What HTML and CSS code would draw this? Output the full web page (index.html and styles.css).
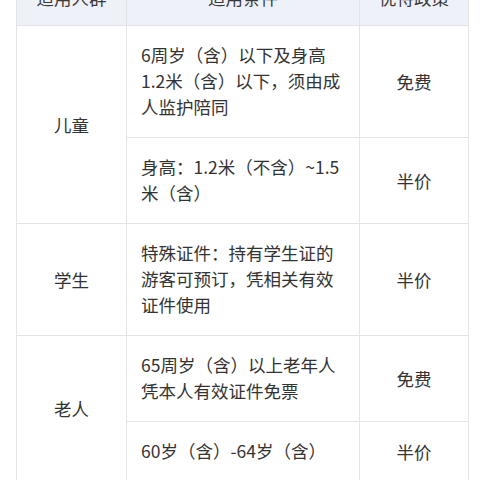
FILE: index.html
```html
<!DOCTYPE html>
<html lang="zh-CN">
<head>
<meta charset="utf-8">
<link rel="stylesheet" href="styles.css">
</head>
<body>
<div class="page">
<table class="policy">
  <colgroup>
    <col class="c1"><col class="c2"><col class="c3">
  </colgroup>
  <thead>
    <tr><th>适用人群</th><th>适用条件</th><th>优待政策</th></tr>
  </thead>
  <tbody>
    <tr class="r3">
      <td class="grp" rowspan="2">儿童</td>
      <td class="cond">6周岁（含）以下及身高1.2米（含）以下，须由成人监护陪同</td>
      <td class="pol">免费</td>
    </tr>
    <tr class="r2">
      <td class="cond">身高：1.2米（不含）~1.5米（含）</td>
      <td class="pol">半价</td>
    </tr>
    <tr class="r3">
      <td class="grp">学生</td>
      <td class="cond">特殊证件：持有学生证的游客可预订，凭相关有效证件使用</td>
      <td class="pol">半价</td>
    </tr>
    <tr class="r2">
      <td class="grp" rowspan="2">老人</td>
      <td class="cond">65周岁（含）以上老年人凭本人有效证件免票</td>
      <td class="pol">免费</td>
    </tr>
    <tr class="r1">
      <td class="cond">60岁（含）-64岁（含）</td>
      <td class="pol">半价</td>
    </tr>
  </tbody>
</table>
</div>
</body>
</html>
```
FILE: styles.css
```css
html, body {
  margin: 0;
  padding: 0;
  background: #ffffff;
}
body {
  font-family: "Noto Sans CJK SC", "Noto Sans", sans-serif;
  color: #333333;
  overflow: hidden;
  height: 480px;
}
.page {
  padding: 0 12px 0 16px;
  margin-top: -30px;
}
.policy {
  border-collapse: collapse;
  width: 452px;
  table-layout: fixed;
  font-size: 17.5px;
  line-height: 26px;
}
.c1 { width: 110px; }
.c2 { width: 233px; }
.c3 { width: 109px; }
.policy th,
.policy td {
  border: 1px solid #e4e4e6;
  padding: 14px 14px 14px 14px;
  vertical-align: middle;
}
.policy th {
  background: #eef1f8;
  font-weight: 400;
  text-align: center;
  color: #3a3a3a;
}
.policy td.cond {
  text-align: left;
  padding: 16px 14px 17px 14px;
}
.policy td.grp,
.policy td.pol {
  text-align: center;
}
```
